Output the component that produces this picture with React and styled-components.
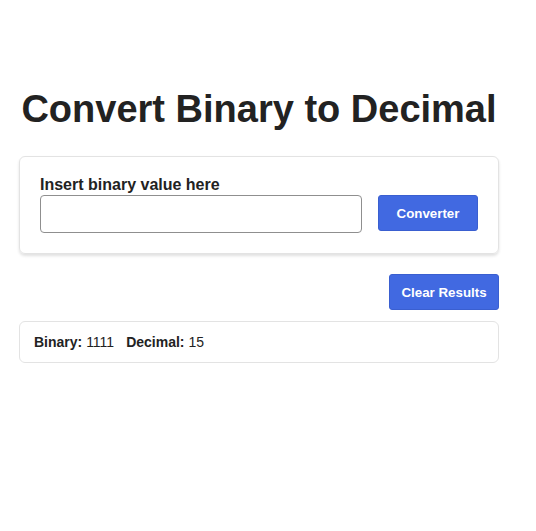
import React, { useState } from 'react'
import styled, { createGlobalStyle } from 'styled-components'

const GlobalStyle = createGlobalStyle`
  body {
    margin: 0;
    font-family: "Liberation Sans", Arial, sans-serif;
    color: #222;
    background: #fff;
  }
`

const Page = styled.div`
  width: 480px;
  margin-left: 19px;
  padding-top: 86px;
`

const Title = styled.h1`
  margin: 0 0 24px;
  text-align: center;
  font-size: 38px;
  font-weight: 700;
  line-height: 46px;
  color: #222;
`

const Card = styled.div`
  border: 1px solid #e3e3e3;
  border-radius: 6px;
  padding: 19px 20px 20px;
  box-shadow: 0 2px 3px rgba(0, 0, 0, 0.12);
`

const Label = styled.label`
  display: block;
  font-size: 16px;
  font-weight: 700;
  line-height: 18px;
  margin-bottom: 1px;
`

const Row = styled.div`
  display: flex;
  align-items: flex-start;
  gap: 16px;
`

const Input = styled.input`
  box-sizing: border-box;
  width: 322px;
  height: 38px;
  border: 1px solid #8f8f8f;
  border-radius: 4px;
  padding: 0 8px;
  font-size: 14px;
  font-family: inherit;
`

const Button = styled.button`
  box-sizing: border-box;
  height: 36px;
  width: ${(p) => p.width}px;
  border: 1px solid #3a5fd0;
  border-radius: 3px;
  background: #4169e1;
  color: #fff;
  font-family: inherit;
  font-size: 13.33px;
  font-weight: 700;
  cursor: pointer;
`

const Actions = styled.div`
  display: flex;
  justify-content: flex-end;
  margin-top: 20px;
`

const Results = styled.div`
  margin-top: 11px;
  border: 1px solid #e3e3e3;
  border-radius: 6px;
  padding: 13px 14px;
  font-size: 14px;
  line-height: 14px;
`

const Item = styled.span`
  margin-right: 12px;

  b {
    font-weight: 700;
  }
`

export default function App() {
  const [value, setValue] = useState('')
  const [result, setResult] = useState({ binary: '1111', decimal: 15 })

  const convert = () => {
    if (!/^[01]+$/.test(value)) return
    setResult({ binary: value, decimal: parseInt(value, 2) })
  }

  return (
    <>
      <GlobalStyle />
      <Page>
        <Title>Convert Binary to Decimal</Title>
        <Card>
          <Label htmlFor="bin">Insert binary value here</Label>
          <Row>
            <Input id="bin" value={value} onChange={(e) => setValue(e.target.value)} />
            <Button width={100} onClick={convert}>Converter</Button>
          </Row>
        </Card>
        <Actions>
          <Button width={110} onClick={() => setResult(null)}>Clear Results</Button>
        </Actions>
        {result && (
          <Results>
            <Item><b>Binary:</b> {result.binary}</Item>
            <Item><b>Decimal:</b> {result.decimal}</Item>
          </Results>
        )}
      </Page>
    </>
  )
}
